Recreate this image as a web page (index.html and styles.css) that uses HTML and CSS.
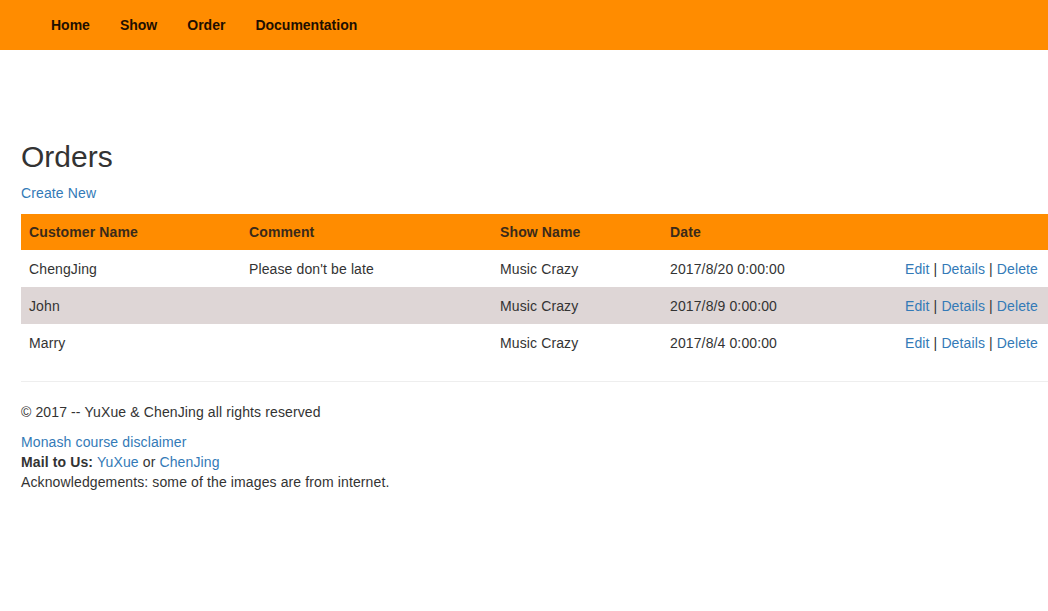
FILE: index.html
```html
<!DOCTYPE html>
<html>
<head>
<meta charset="utf-8">
<title>Orders</title>
<link rel="stylesheet" href="styles.css">
</head>
<body>
<nav class="navbar">
  <ul class="nav-links">
    <li><a href="#">Home</a></li>
    <li><a href="#">Show</a></li>
    <li><a href="#">Order</a></li>
    <li><a href="#">Documentation</a></li>
  </ul>
</nav>
<main class="content">
  <h2 class="title">Orders</h2>
  <p class="create"><a href="#">Create New</a></p>
  <table class="orders">
    <colgroup>
      <col class="c1"><col class="c2"><col class="c3"><col class="c4"><col class="c5">
    </colgroup>
    <thead>
      <tr><th>Customer Name</th><th>Comment</th><th>Show Name</th><th>Date</th><th></th></tr>
    </thead>
    <tbody>
      <tr><td>ChengJing</td><td>Please don't be late</td><td>Music Crazy</td><td>2017/8/20 0:00:00</td><td><a href="#">Edit</a> | <a href="#">Details</a> | <a href="#">Delete</a></td></tr>
      <tr class="stripe"><td>John</td><td></td><td>Music Crazy</td><td>2017/8/9 0:00:00</td><td><a href="#">Edit</a> | <a href="#">Details</a> | <a href="#">Delete</a></td></tr>
      <tr><td>Marry</td><td></td><td>Music Crazy</td><td>2017/8/4 0:00:00</td><td><a href="#">Edit</a> | <a href="#">Details</a> | <a href="#">Delete</a></td></tr>
    </tbody>
  </table>
  <hr class="rule">
  <footer class="footer">
    <p class="copy">&copy; 2017 -- YuXue &amp; ChenJing all rights reserved</p>
    <div class="lines">
      <div><a href="#">Monash course disclaimer</a></div>
      <div><strong>Mail to Us:</strong> <a href="#">YuXue</a> or <a href="#">ChenJing</a></div>
      <div>Acknowledgements: some of the images are from internet.</div>
    </div>
  </footer>
</main>
</body>
</html>
```
FILE: styles.css
```css
* { box-sizing: border-box; }
html, body { margin: 0; padding: 0; }
body {
  font-family: "Liberation Sans", Arial, sans-serif;
  font-size: 14px;
  line-height: 20px;
  color: #333;
  background: #fff;
  letter-spacing: 0.12px;
}
a { color: #337ab7; text-decoration: none; }

.navbar {
  height: 50px;
  background: #ff8c00;
  display: flex;
  align-items: center;
  padding-left: 36px;
}
.nav-links {
  list-style: none;
  margin: 0;
  padding: 0;
  display: flex;
}
.nav-links a {
  display: block;
  padding: 15px 15px;
  line-height: 20px;
  font-weight: bold;
  color: #1e0f00;
  letter-spacing: 0;
}

.content {
  padding: 90px 0 0 21px;
}
.title {
  margin: 0 0 10px;
  font-size: 30px;
  font-weight: 500;
  line-height: 33px;
  color: #333;
  letter-spacing: 0;
}
.create { margin: 0 0 11px; }

.orders {
  width: 1027px;
  border-collapse: collapse;
  table-layout: fixed;
  margin-bottom: 20px;
}
.c1 { width: 220px; }
.c2 { width: 251px; }
.c3 { width: 170px; }
.c4 { width: 235px; }
.c5 { width: 151px; }
.orders th {
  background: #ff8c00;
  text-align: left;
  font-weight: bold;
  color: #3a2a1a;
  height: 36px;
  padding: 0 8px;
  white-space: nowrap;
}
.orders td {
  height: 37px;
  padding: 0 8px;
  white-space: nowrap;
}
.orders .stripe td { background: #ded6d6; }

.rule {
  margin: 0 0 20px;
  border: 0;
  border-top: 1px solid #eee;
  height: 0;
}
.copy { margin: 0 0 10px; }
```
